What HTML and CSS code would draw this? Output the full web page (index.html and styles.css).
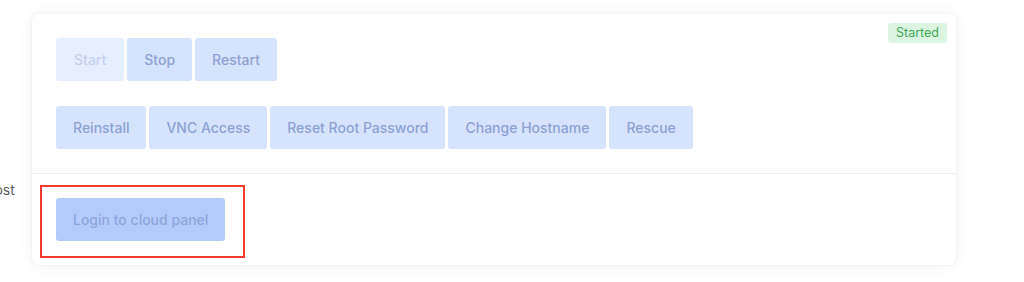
FILE: index.html
```html
<!DOCTYPE html>
<html>
<head>
<meta charset="utf-8">
<link rel="stylesheet" href="styles.css">
</head>
<body>
<div class="page">
  <div class="side-label">Host</div>
  <div class="card">
    <span class="badge">Started</span>
    <div class="card-body">
      <div class="btn-row">
        <button class="btn btn-disabled">Start</button>
        <button class="btn">Stop</button>
        <button class="btn">Restart</button>
      </div>
      <div class="btn-row">
        <button class="btn">Reinstall</button>
        <button class="btn">VNC Access</button>
        <button class="btn">Reset Root Password</button>
        <button class="btn">Change Hostname</button>
        <button class="btn">Rescue</button>
      </div>
    </div>
    <div class="card-footer">
      <div class="highlight">
        <button class="btn btn-primary">Login to cloud panel</button>
      </div>
    </div>
  </div>
</div>
</body>
</html>
```
FILE: styles.css
```css
* { box-sizing: border-box; }
html, body { margin: 0; padding: 0; background: #ffffff; }
body {
  font-family: "Inter", "Noto Sans", sans-serif;
  width: 1024px;
  height: 282px;
  overflow: hidden;
}
.page {
  position: relative;
  padding: 14px 0 0 32px;
}
.side-label {
  position: absolute;
  left: -16px;
  top: 181px;
  font-size: 14px;
  color: #5a5a5a;
}
.card {
  position: relative;
  width: 924px;
  background: #fff;
  border-radius: 6px;
  box-shadow: 0 0 16px rgba(0,0,0,0.06), 0 0 2px rgba(0,0,0,0.08);
}
.badge {
  position: absolute;
  top: 9px;
  right: 9px;
  background: #dcf5e1;
  color: #43a95a;
  font-size: 12.5px;
  line-height: 20px;
  padding: 0 8px;
  border-radius: 3px;
}
.card-body {
  padding: 24px 24px 0 24px;
  border-bottom: 1px solid #eeeeee;
}
.btn-row {
  display: flex;
  gap: 3px;
  margin-bottom: 25px;
}
.btn-row + .btn-row { margin-bottom: 24px; }
.btn {
  font-family: inherit;
  font-size: 14px;
  font-weight: 500;
  line-height: 21px;
  padding: 11px 17px;
  border: none;
  border-radius: 3px;
  background: #d6e3fc;
  color: #8ca2d4;
  cursor: pointer;
}
.btn-disabled {
  background: #e6efff;
  color: #c4d1ee;
  padding: 11px 18px;
}
.card-footer {
  padding: 11px 0 7px 8px;
}
.highlight {
  display: inline-block;
  border: 2px solid #f43a2f;
  padding: 11px 18px 15px 14px;
}
.btn-primary {
  background: #b3cbfb;
  color: #8da6dc;
}
```
